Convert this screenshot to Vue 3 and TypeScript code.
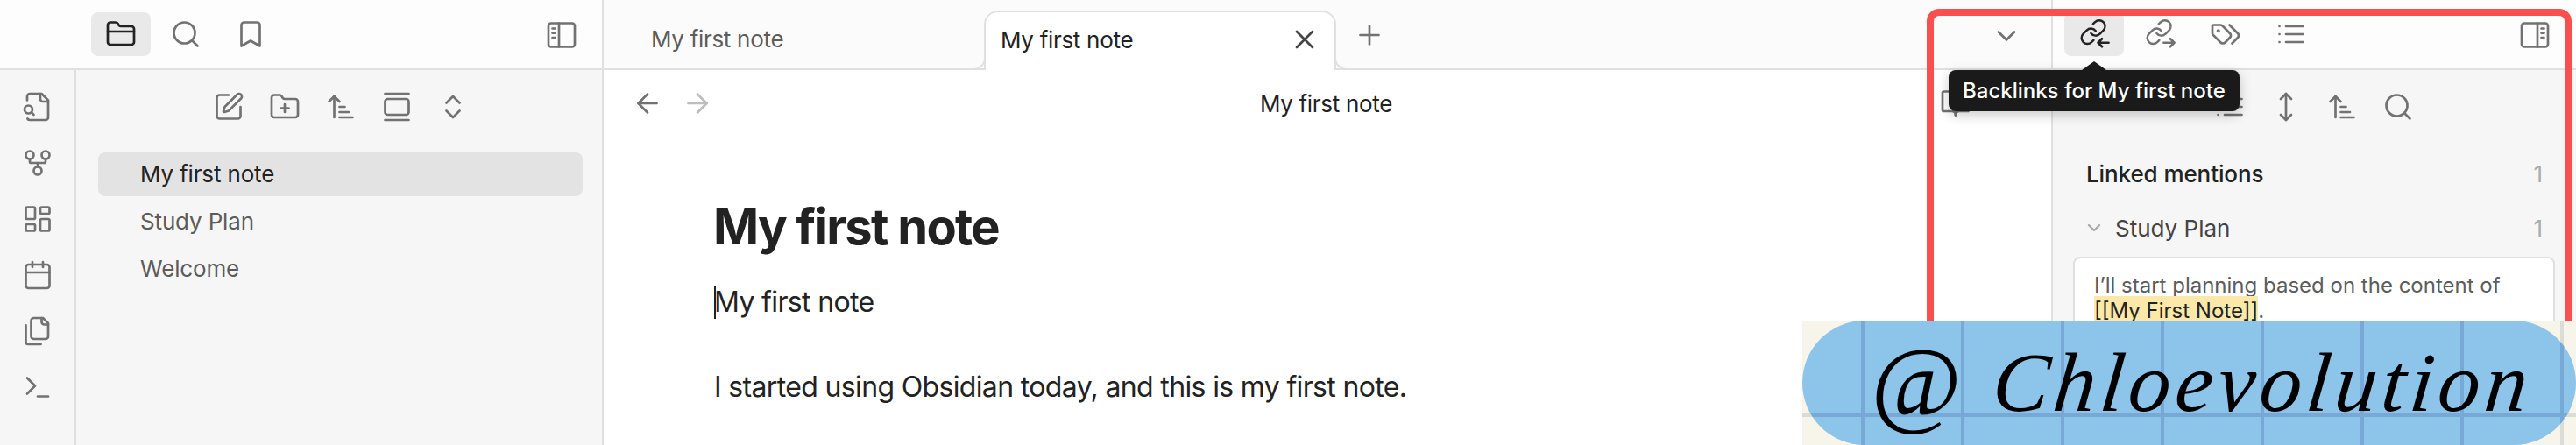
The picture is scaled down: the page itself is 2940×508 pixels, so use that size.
<script setup lang="ts">
const icons: Record<string, string> = {
  folder: '<path d="M20 20a2 2 0 0 0 2-2V8a2 2 0 0 0-2-2h-7.9a2 2 0 0 1-1.69-.9L9.6 3.9A2 2 0 0 0 7.93 3H4a2 2 0 0 0-2 2v13a2 2 0 0 0 2 2Z"/><path d="M2 10h20"/>',
  search: '<circle cx="11" cy="11" r="8"/><path d="m21 21-4.3-4.3"/>',
  bookmark: '<path d="m19 21-7-4-7 4V5a2 2 0 0 1 2-2h10a2 2 0 0 1 2 2v16z"/>',
  sideLeft: '<rect x="2" y="3" width="20" height="18" rx="2"/><path d="M10 3v18M5 7h2M5 10.5h2M5 14h2"/>',
  sideRight: '<rect x="2" y="3" width="20" height="18" rx="2"/><path d="M14 3v18M17 7h2M17 10.5h2M17 14h2"/>',
  fileSearch: '<path d="M14 2v4a2 2 0 0 0 2 2h4"/><path d="M4.268 21a2 2 0 0 0 1.727 1H18a2 2 0 0 0 2-2V7l-5-5H6a2 2 0 0 0-2 2v3"/><path d="m9 18-1.5-1.5"/><circle cx="5" cy="14" r="3"/>',
  graph: '<circle cx="12" cy="18" r="3"/><circle cx="6" cy="6" r="3"/><circle cx="18" cy="6" r="3"/><path d="M18 9v2c0 .6-.4 1-1 1H7c-.6 0-1-.4-1-1V9"/><path d="M12 12v3"/>',
  dashboard: '<rect width="7" height="9" x="3" y="3" rx="1"/><rect width="7" height="5" x="14" y="3" rx="1"/><rect width="7" height="9" x="14" y="12" rx="1"/><rect width="7" height="5" x="3" y="16" rx="1"/>',
  calendar: '<path d="M8 2v4"/><path d="M16 2v4"/><rect width="18" height="18" x="3" y="4" rx="2"/><path d="M3 10h18"/>',
  files: '<path d="M20 7h-3a2 2 0 0 1-2-2V2"/><path d="M9 18a2 2 0 0 1-2-2V4a2 2 0 0 1 2-2h7l4 4v10a2 2 0 0 1-2 2Z"/><path d="M3 7.6v12.8A1.6 1.6 0 0 0 4.6 22h9.8"/>',
  terminal: '<polyline points="4 17 10 11 4 5"/><line x1="12" x2="20" y1="19" y2="19"/>',
  pen: '<path d="M12 3H5a2 2 0 0 0-2 2v14a2 2 0 0 0 2 2h14a2 2 0 0 0 2-2v-7"/><path d="M18.375 2.625a1 1 0 0 1 3 3l-9.013 9.014a2 2 0 0 1-.853.505l-2.873.84a.5.5 0 0 1-.62-.62l.84-2.873a2 2 0 0 1 .506-.852z"/>',
  folderPlus: '<path d="M12 10v6"/><path d="M9 13h6"/><path d="M20 20a2 2 0 0 0 2-2V8a2 2 0 0 0-2-2h-7.9a2 2 0 0 1-1.69-.9L9.6 3.9A2 2 0 0 0 7.93 3H4a2 2 0 0 0-2 2v13a2 2 0 0 0 2 2Z"/>',
  sort: '<path d="m3 8 4-4 4 4"/><path d="M7 4v16"/><path d="M11 12h4"/><path d="M11 16h7"/><path d="M11 20h10"/>',
  gallery: '<path d="M3 2h18"/><rect width="18" height="12" x="3" y="6" rx="2"/><path d="M3 22h18"/>',
  chevrons: '<path d="m7 15 5 5 5-5"/><path d="m7 9 5-5 5 5"/>',
  linkIn: '<g transform="translate(0.6 -0.4) scale(0.9)"><path d="M10 13a5 5 0 0 0 7.54.54l3-3a5 5 0 0 0-7.07-7.07l-1.72 1.71"/><path d="M14 11a5 5 0 0 0-7.54-.54l-3 3a5 5 0 0 0 7.07 7.07l1.71-1.71"/></g><path d="M23 18.500h-8M18 15.500l-3 3 3 3"/>',
  linkOut: '<g transform="translate(0.600 -0.400) scale(0.9)"><path d="M10 13a5 5 0 0 0 7.54.54l3-3a5 5 0 0 0-7.07-7.07l-1.72 1.71"/><path d="M14 11a5 5 0 0 0-7.54-.54l-3 3a5 5 0 0 0 7.07 7.07l1.71-1.71"/></g><path d="M15 18.500h8M20 15.500l3 3-3 3"/>',
  tags: '<path d="m15 5 6.3 6.3a2.4 2.4 0 0 1 0 3.4L17 19"/><path d="M9.586 5.586A2 2 0 0 0 8.172 5H3a1 1 0 0 0-1 1v5.172a2 2 0 0 0 .586 1.414L8.29 18.29a2.426 2.426 0 0 0 3.42 0l3.58-3.58a2.426 2.426 0 0 0 0-3.42z"/><circle cx="6.5" cy="9.500" r=".5" fill="currentColor"/>',
  list: '<path d="M3 12h.01"/><path d="M3 18h.01"/><path d="M3 6h.01"/><path d="M8 12h13"/><path d="M8 18h13"/><path d="M8 6h13"/>',
  move: '<path d="M12 2v20"/><path d="m8 18 4 4 4-4"/><path d="m8 6 4-4 4 4"/>',
  x: '<path d="M18 6 6 18"/><path d="m6 6 12 12"/>',
  plus: '<path d="M5 12h14"/><path d="M12 5v14"/>',
  left: '<path d="m12 19-7-7 7-7"/><path d="M19 12H5"/>',
  right: '<path d="M5 12h14"/><path d="m12 5 7 7-7 7"/>',
  down: '<path d="m6 9 6 6 6-6"/>',
  book: '<path d="M12 7v14"/><path d="M3 18a1 1 0 0 1-1-1V4a1 1 0 0 1 1-1h5a4 4 0 0 1 4 4 4 4 0 0 1 4-4h5a1 1 0 0 1 1 1v13a1 1 0 0 1-1 1h-6a3 3 0 0 0-3 3 3 3 0 0 0-3-3z"/>',
  dots: '<circle cx="4" cy="12" r="1.300" fill="currentColor"/><circle cx="12" cy="12" r="1.300" fill="currentColor"/><circle cx="20" cy="12" r="1.300" fill="currentColor"/>',
}
const leftTabs = ['folder', 'search', 'bookmark']
const ribbon = ['fileSearch', 'graph', 'dashboard', 'calendar', 'files', 'terminal']
const navLeft = ['pen', 'folderPlus', 'sort', 'gallery', 'chevrons']
const files = ['My first note', 'Study Plan', 'Welcome']
const rightTabs = ['linkIn', 'linkOut', 'tags', 'list']
const navRight = ['list', 'move', 'sort', 'search']
</script>

<template>
  <div class="app">
    <section class="col left">
      <header class="bar left-bar">
        <button v-for="(n, i) in leftTabs" :key="n" class="tab-btn" :class="{ on: i === 0 }">
          <svg class="ic" viewBox="0 0 24 24" v-html="icons[n]"></svg>
        </button>
        <svg class="ic push" viewBox="0 0 24 24" v-html="icons.sideLeft"></svg>
      </header>
      <div class="left-body">
        <nav class="ribbon">
          <svg v-for="n in ribbon" :key="n" class="ic" viewBox="0 0 24 24" v-html="icons[n]"></svg>
        </nav>
        <div class="explorer">
          <div class="nav-row">
            <span v-for="n in navLeft" :key="n" class="nav-btn">
              <svg class="ic" viewBox="0 0 24 24" v-html="icons[n]"></svg>
            </span>
          </div>
          <ul class="files">
            <li v-for="(f, i) in files" :key="f" class="file" :class="{ on: i === 0 }">{{ f }}</li>
          </ul>
        </div>
      </div>
    </section>

    <section class="col main">
      <header class="bar main-bar">
        <div class="tab">My first note</div>
        <div class="tab active">
          <span>My first note</span>
          <svg class="ic dark" viewBox="0 0 24 24" v-html="icons.x"></svg>
        </div>
        <svg class="ic plus" viewBox="0 0 24 24" v-html="icons.plus"></svg>
        <svg class="ic chev" viewBox="0 0 24 24" v-html="icons.down"></svg>
      </header>
      <div class="view-head">
        <div class="arrows">
          <svg class="ic" viewBox="0 0 24 24" v-html="icons.left"></svg>
          <svg class="ic faint" viewBox="0 0 24 24" v-html="icons.right"></svg>
        </div>
        <div class="view-title">My first note</div>
        <div class="actions">
          <svg class="ic" viewBox="0 0 24 24" v-html="icons.book"></svg>
          <svg class="ic" viewBox="0 0 24 24" v-html="icons.dots"></svg>
        </div>
      </div>
      <article class="note">
        <h1>My first note</h1>
        <p class="first"><i class="caret"></i>My first note</p>
        <p class="second">I started using Obsidian today, and this is my first note.</p>
      </article>
    </section>

    <section class="col right">
      <header class="bar right-bar">
        <button v-for="(n, i) in rightTabs" :key="n" class="tab-btn" :class="{ on: i === 0 }">
          <svg class="ic" viewBox="0 0 24 24" v-html="icons[n]"></svg>
        </button>
        <svg class="ic push" viewBox="0 0 24 24" v-html="icons.sideRight"></svg>
      </header>
      <div class="right-body">
        <div class="nav-row nav-right">
          <span v-for="n in navRight" :key="n" class="nav-btn">
            <svg class="ic" viewBox="0 0 24 24" v-html="icons[n]"></svg>
          </span>
        </div>
        <div class="mention-head">
          <span>Linked mentions</span><span class="count">1</span>
        </div>
        <div class="mention-file">
          <svg class="mini" viewBox="0 0 24 24" v-html="icons.down"></svg>
          <span>Study Plan</span><span class="count">1</span>
        </div>
        <div class="card">
          I’ll start planning based on the content of
          <mark>[[My First Note]]</mark>.
        </div>
      </div>
    </section>

    <div class="frame"></div>

    <div class="tooltip">Backlinks for My first note</div>

    <div class="mark-wrap">
      <div class="pill">
        <span class="at">@</span>
        <span class="sign">Chloevolution</span>
      </div>
    </div>
  </div>
</template>

<style>
html, body { margin: 0; padding: 0; background: #fff; }
</style>

<style scoped>
.app {
  position: relative;
  display: flex;
  width: 2940px;
  height: 508px;
  overflow: hidden;
  background: #fff;
  font-family: Inter, "Liberation Sans", sans-serif;
  font-size: 26px;
  color: #222;
}
.ic {
  width: 36px;
  height: 36px;
  flex: none;
  fill: none;
  stroke: currentColor;
  stroke-width: 1.8;
  stroke-linecap: round;
  stroke-linejoin: round;
  color: #727272;
}
.col { display: flex; flex-direction: column; height: 100%; box-sizing: border-box; }
.left { width: 689px; border-right: 2px solid #e0e0e0; }
.main { width: 1652px; }
.right { width: 599px; border-left: 2px solid #e0e0e0; }
.bar {
  display: flex;
  align-items: flex-start;
  height: 80px;
  flex: none;
  box-sizing: border-box;
  border-bottom: 2px solid #e0e0e0;
  background: #fdfdfd;
}
.left-bar { padding: 14px 28px 0 104px; gap: 6px; }
.right-bar { padding: 14px 29px 0 13px; gap: 7px; }
.tab-btn {
  width: 68px;
  height: 50px;
  padding: 0;
  border: 0;
  border-radius: 8px;
  background: transparent;
  display: flex;
  align-items: center;
  justify-content: center;
}
.tab-btn.on { background: #e9e9e9; }
.tab-btn.on .ic { color: #222; }
.push { margin-left: auto; margin-top: 8px; }
.left-body { flex: 1; display: flex; background: #f6f6f6; min-height: 0; }
.ribbon {
  width: 87px;
  box-sizing: border-box;
  border-right: 2px solid #e0e0e0;
  display: flex;
  flex-direction: column;
  align-items: center;
  gap: 28px;
  padding-top: 24px;
}
.explorer { flex: 1; padding: 0 22px 0 25px; }
.nav-row { display: flex; justify-content: center; padding-top: 24px; }
.nav-right { padding-right: 2px; }
.nav-btn { width: 64px; height: 36px; display: flex; justify-content: center; }
.files { list-style: none; margin: 34px 0 0; padding: 0; }
.file {
  height: 50px;
  line-height: 50px;
  margin-bottom: 4px;
  padding-left: 48px;
  border-radius: 8px;
  color: #5c5c5c;
  letter-spacing: -0.15px;
}
.file.on { background: #e3e3e3; color: #222; }
.main-bar { position: relative; padding: 12px 0 0 32px; background: #fbfbfb; }
.tab {
  width: 402px;
  height: 68px;
  box-sizing: border-box;
  padding: 0 20px 4px 22px;
  display: flex;
  align-items: center;
  justify-content: space-between;
  color: #5c5c5c;
  letter-spacing: -0.3px;
}
.tab.active {
  position: relative;
  z-index: 1;
  background: #fff;
  color: #222;
  border: 2px solid #e0e0e0;
  border-bottom: 0;
  border-radius: 16px 16px 0 0;
  padding: 0 16px 4px 17px;
  margin-bottom: -2px;
}
.tab.active::before,
.tab.active::after {
  content: "";
  position: absolute;
  bottom: 0;
  width: 14px;
  height: 14px;
  background: #fbfbfb;
  border-bottom: 2px solid #e0e0e0;
}
.tab.active::before { left: -16px; border-right: 2px solid #e0e0e0; border-bottom-right-radius: 14px; }
.tab.active::after { right: -16px; border-left: 2px solid #e0e0e0; border-bottom-left-radius: 14px; }
.dark { color: #444; }
.plus { margin: 10px 0 0 20px; }
.chev { margin: 11px 33px 0 auto; }
.view-head {
  display: grid;
  grid-template-columns: 1fr auto 1fr;
  align-items: center;
  height: 76px;
  padding: 0 35px 0 32px;
}
.arrows { display: flex; gap: 21px; }
.faint { color: #bdbdbd; }
.view-title { color: #222; letter-spacing: -0.3px; }
.actions { display: flex; justify-content: flex-end; gap: 20px; }
.note { padding: 70px 0 0 126px; }
h1 {
  margin: 0 0 0 -1px;
  font-size: 56px;
  line-height: 66px;
  font-weight: 700;
  letter-spacing: -1.7px;
  color: #222;
}
.note p { margin: 0; font-size: 32px; line-height: 48px; letter-spacing: -0.65px; color: #222; position: relative; }
.first { margin-top: 29px !important; }
.second { margin-top: 49px !important; }
.caret { position: absolute; left: 0; top: 5px; width: 2px; height: 38px; background: #222; }
.right-body { flex: 1; background: #f6f6f6; min-height: 0; }
.mention-head {
  display: flex;
  justify-content: space-between;
  margin-top: 34px;
  padding: 0 38px;
  line-height: 50px;
  font-weight: 500;
  letter-spacing: -0.1px;
}
.count { color: #ababab; font-weight: 400; }
.mention-file {
  display: flex;
  align-items: center;
  gap: 12px;
  height: 40px;
  margin-top: 16px;
  padding: 0 38px 0 35px;
  color: #444;
}
.mention-file .count { margin-left: auto; }
.mini {
  width: 24px;
  height: 24px;
  fill: none;
  stroke: #ababab;
  stroke-width: 2.4;
  stroke-linecap: round;
  stroke-linejoin: round;
}
.card {
  margin: 13px 24px 0 23px;
  padding: 16px 22px;
  background: #fff;
  border: 2px solid #e0e0e0;
  border-radius: 8px;
  font-size: 24px;
  line-height: 29px;
  color: #5c5c5c;
  height: 200px;
}
mark { background: #fce8a9; color: #222; padding: 2px 0 3px; }
.frame {
  position: absolute;
  left: 2199px;
  top: 10px;
  width: 736px;
  height: 520px;
  box-sizing: border-box;
  border: 8px solid #fb4f4f;
  border-radius: 14px;
  pointer-events: none;
}
.tooltip {
  position: absolute;
  left: 2224px;
  top: 80px;
  width: 332px;
  height: 47px;
  box-sizing: border-box;
  padding-left: 16px;
  line-height: 47px;
  background: #1a1a1a;
  color: #fff;
  font-size: 24px;
  font-weight: 500;
  border-radius: 8px;
  box-shadow: 0 4px 14px rgba(0, 0, 0, .22);
  white-space: nowrap;
}
.tooltip::before {
  content: "";
  position: absolute;
  left: 152px;
  top: -10px;
  border-left: 14px solid transparent;
  border-right: 14px solid transparent;
  border-bottom: 10px solid #1a1a1a;
}
.mark-wrap {
  position: absolute;
  left: 2057px;
  top: 366px;
  width: 883px;
  height: 142px;
  background-color: #f7f5e9;
  background-image:
    linear-gradient(#dcdcd6, #dcdcd6),
    repeating-linear-gradient(90deg, transparent 0, transparent 67px, #dcdcd6 67px, #dcdcd6 71px, transparent 71px, transparent 114px);
  background-size: 100% 4px, 100% 100%;
  background-position: 0 106px, 0 0;
  background-repeat: no-repeat;
}
.pill {
  display: flex;
  align-items: center;
  height: 100%;
  border-radius: 71px;
  padding-left: 78px;
  box-sizing: border-box;
  background-color: #8dc4e9;
  background-image:
    linear-gradient(#78a9d6, #78a9d6),
    repeating-linear-gradient(90deg, transparent 0, transparent 67px, #78a9d6 67px, #78a9d6 71px, transparent 71px, transparent 114px);
  background-size: 100% 4px, 100% 100%;
  background-position: 0 106px, 0 0;
  background-repeat: no-repeat;
  color: #000;
  font-family: "Liberation Serif", serif;
  font-style: italic;
  white-space: nowrap;
}
.at { font-size: 112px; line-height: 142px; width: 140px; flex: none; }
.sign { font-size: 96px; line-height: 142px; font-weight: 400; letter-spacing: 5.5px; transform: skewX(-6deg); }
</style>
